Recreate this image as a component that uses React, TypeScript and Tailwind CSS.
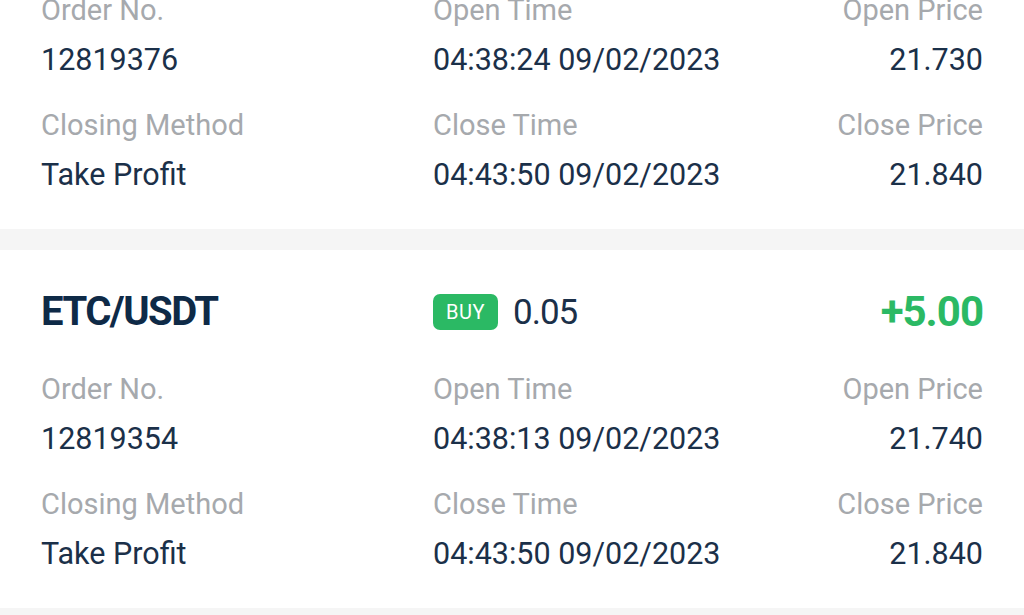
import React from 'react';

type Order = {
    pair?: string;
    side?: string;
    lots?: string;
    profit?: string;
    orderNo: string;
    openTime: string;
    openPrice: string;
    method: string;
    closeTime: string;
    closePrice: string;
};

const orders: Order[] = [
    {
        orderNo: '12819376',
        openTime: '04:38:24 09/02/2023',
        openPrice: '21.730',
        method: 'Take Profit',
        closeTime: '04:43:50 09/02/2023',
        closePrice: '21.840',
    },
    {
        pair: 'ETC/USDT',
        side: 'BUY',
        lots: '0.05',
        profit: '+5.00',
        orderNo: '12819354',
        openTime: '04:38:13 09/02/2023',
        openPrice: '21.740',
        method: 'Take Profit',
        closeTime: '04:43:50 09/02/2023',
        closePrice: '21.840',
    },
];

function Field({ label, value, right }: { label: string; value: string; right?: boolean }) {
    return (
        <div className={right ? 'text-right' : ''}>
            <div className="h-[36px] whitespace-nowrap text-[29px] leading-[36px] text-[#a6a9ad]">{label}</div>
            <div className="mt-[14px] h-[36px] whitespace-nowrap text-[30.5px] leading-[36px] text-[#1b3049]">{value}</div>
        </div>
    );
}

function OrderCard({ order, first }: { order: Order; first?: boolean }) {
    return (
        <div className={`bg-white px-[41px] pb-[36px] ${first ? '' : 'pt-[40px]'}`}>
            {order.pair && (
                <div className="mb-[37px] grid h-[44px] grid-cols-[392px_1fr_auto] items-center leading-none">
                    <div className="text-[40px] font-bold leading-none tracking-[-1.5px] text-[#0e2a47]">{order.pair}</div>
                    <div className="flex items-center gap-[15px]">
                        <span className="flex h-[36px] w-[65px] items-center justify-center rounded-[7px] bg-[#2bb964] text-[20px] leading-none tracking-[0.5px] text-white">
                            {order.side}
                        </span>
                        <span className="text-[35px] leading-none tracking-[-1px] text-[#1b3049]">{order.lots}</span>
                    </div>
                    <div className="text-[42px] font-bold leading-none tracking-[-1px] text-[#2bb964]">{order.profit}</div>
                </div>
            )}
            <div className={`grid grid-cols-[392px_1fr_auto] gap-y-[29px] ${first ? '-mt-[8px]' : ''}`}>
                <Field label="Order No." value={order.orderNo} />
                <Field label="Open Time" value={order.openTime} />
                <Field label="Open Price" value={order.openPrice} right />
                <Field label="Closing Method" value={order.method} />
                <Field label="Close Time" value={order.closeTime} />
                <Field label="Close Price" value={order.closePrice} right />
            </div>
        </div>
    );
}

export default function App() {
    return (
        <div className="h-[615px] w-[1024px] overflow-hidden bg-[#f5f5f5] font-['Roboto','Liberation_Sans',sans-serif]">
            {orders.map((o, i) => (
                <div key={o.orderNo} className={i === 0 ? '' : 'mt-[21px]'}>
                    <OrderCard order={o} first={i === 0} />
                </div>
            ))}
        </div>
    );
}
